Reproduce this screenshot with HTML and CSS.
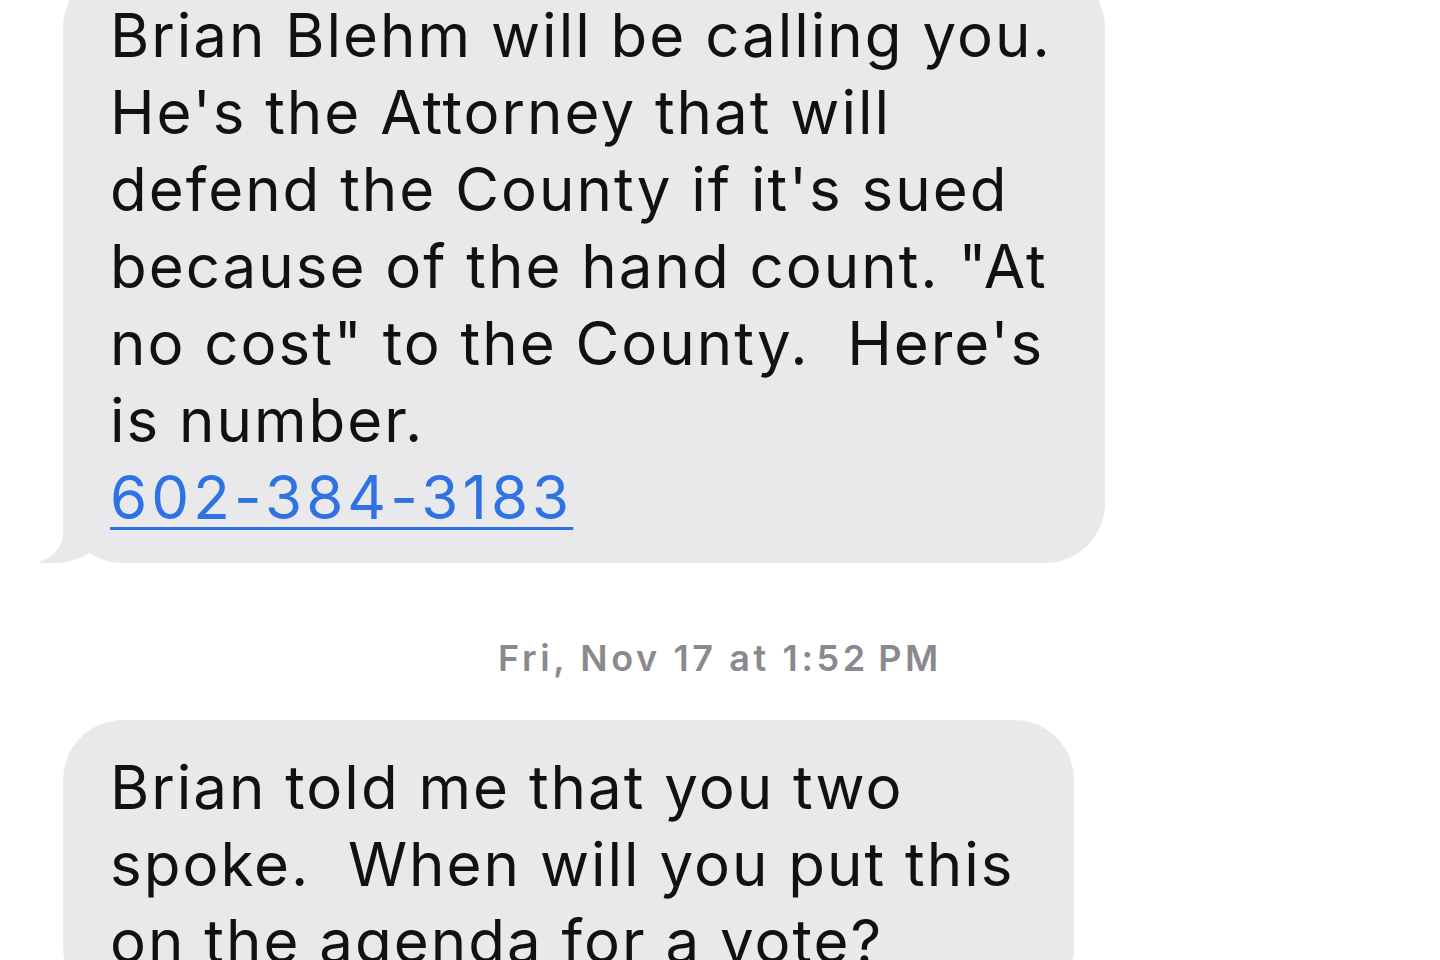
FILE: index.html
```html
<!DOCTYPE html>
<html lang="en">
<head>
  <meta charset="UTF-8">
  <meta name="viewport" content="width=device-width, initial-scale=1.0">
  <title>Messages</title>
  <link rel="stylesheet" href="styles.css">
</head>
<body>
  <div class="thread">
    <div class="bubble first tail">
      Brian Blehm will be calling you.<br>
      He's the Attorney that will<br>
      defend the County if it's sued<br>
      because of the hand count. "At<br>
      no cost" to the County.&nbsp; Here's<br>
      is number.<br>
      <a href="#" class="phone">602-384-3183</a>
    </div>

    <div class="stamp">Fri, Nov 17 at 1:52&#8239;PM</div>

    <div class="bubble wide">
      Brian told me that you two<br>
      spoke.&nbsp; When will you put this<br>
      on the agenda for a vote?
    </div>
  </div>
</body>
</html>
```

FILE: styles.css
```css
* {
  box-sizing: border-box;
  margin: 0;
  padding: 0;
}

body {
  background: #fff;
  height: 960px;
  overflow: hidden;
  font-family: 'Inter', 'Liberation Sans', sans-serif;
}

.thread {
  display: flex;
  flex-direction: column;
  align-items: flex-start;
}

.bubble {
  position: relative;
  margin-left: 63px;
  background: #e9e9ec;
  color: #111;
  font-size: 60px;
  line-height: 77px;
  letter-spacing: 2px;
  padding: 29px 53px 27px 47px;
  border-radius: 60px;
}

.bubble.first {
  margin-top: -32px;
}

.bubble.wide {
  padding-right: 60px;
}

.bubble.tail::before {
  content: "";
  position: absolute;
  left: -23px;
  bottom: 0;
  width: 70px;
  height: 60px;
  background: #e9e9ec;
  border-bottom-right-radius: 56px 46px;
}

.bubble.tail::after {
  content: "";
  position: absolute;
  left: -90px;
  bottom: 0;
  width: 90px;
  height: 60px;
  background: #fff;
  border-bottom-right-radius: 34px 30px;
}

.phone {
  color: #2f72e4;
  letter-spacing: 4.1px;
  text-decoration: underline;
  text-decoration-thickness: 3px;
  text-underline-offset: 8px;
}

.stamp {
  align-self: stretch;
  text-align: center;
  margin: 73px 0 40px;
  color: #8a8a8e;
  font-size: 36px;
  font-weight: 600;
  letter-spacing: 3.6px;
  line-height: 44px;
}
```
